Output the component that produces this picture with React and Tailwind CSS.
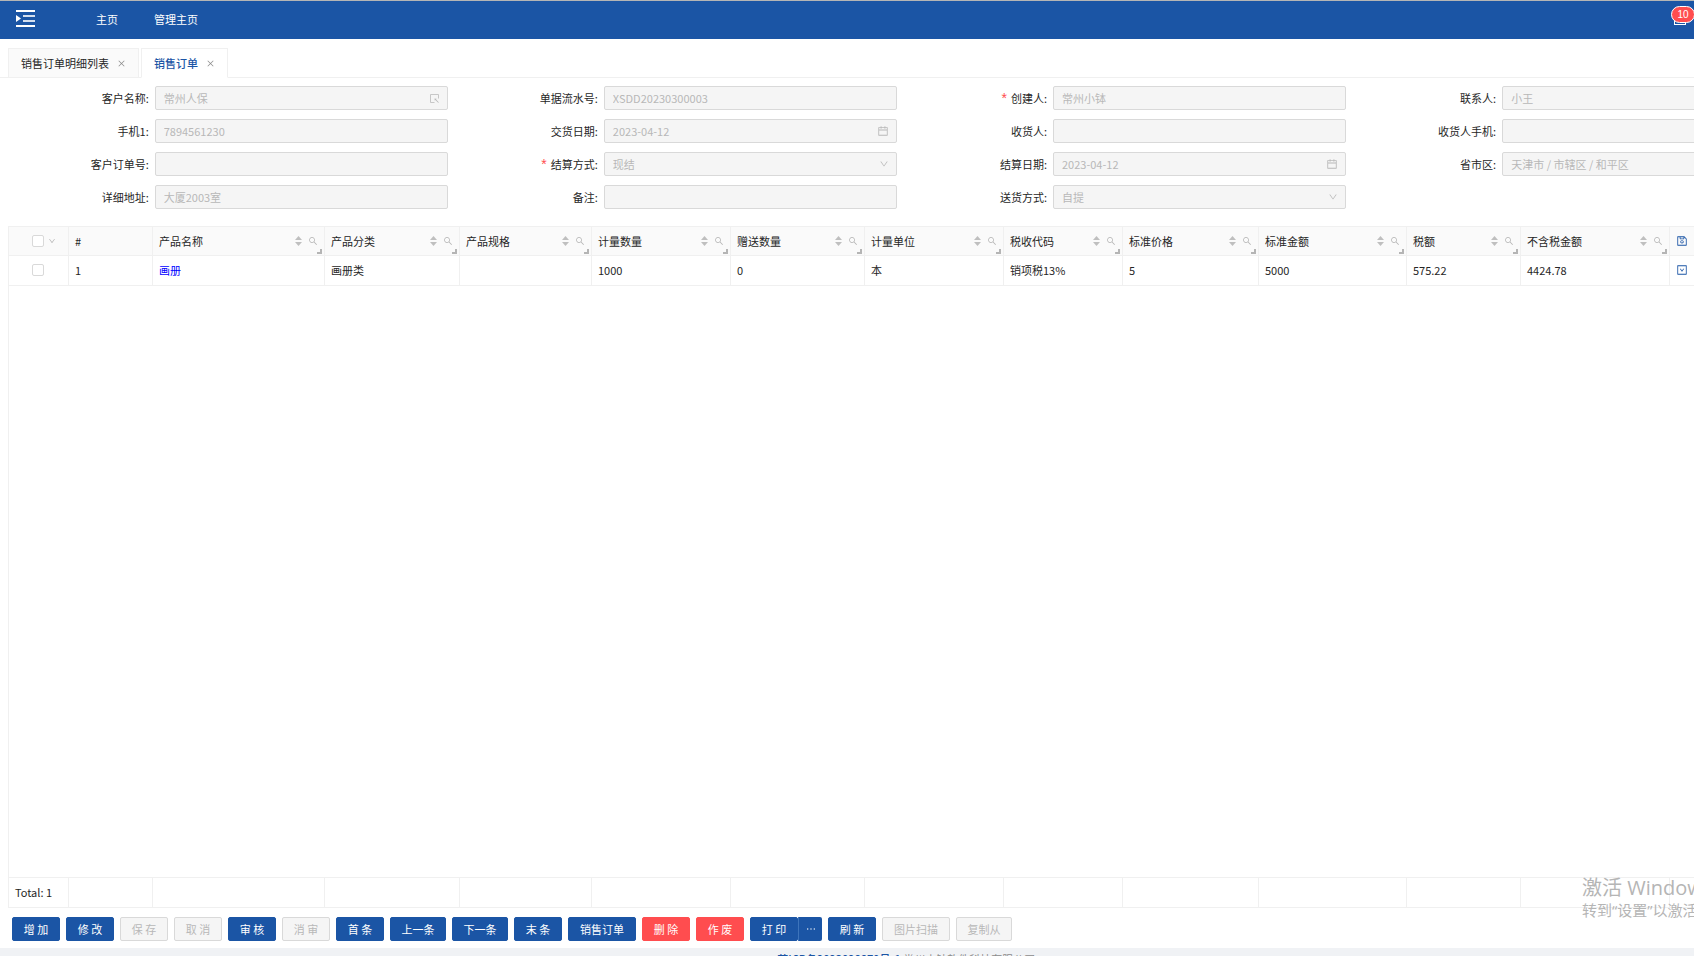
import React from 'react';
import {
  AiOutlineCalendar,
  AiOutlineClose,
  AiOutlineDown,
  AiOutlineDownSquare,
  AiOutlineEllipsis,
  AiOutlineSave,
  AiOutlineSearch,
  AiOutlineSelect,
} from 'react-icons/ai';

const topMenu = ['主页', '管理主页'];

const tabs = [
  { title: '销售订单明细列表', active: false },
  { title: '销售订单', active: true },
];

const fields = [
  { id: 'customer', label: '客户名称', value: '常州人保', icon: 'picker' },
  { id: 'serial', label: '单据流水号', value: 'XSDD20230300003' },
  { id: 'creator', label: '创建人', value: '常州小钵', required: true },
  { id: 'contact', label: '联系人', value: '小王' },
  { id: 'phone', label: '手机1', value: '7894561230' },
  { id: 'delivery', label: '交货日期', value: '2023-04-12', icon: 'date' },
  { id: 'receiver', label: '收货人', value: '' },
  { id: 'receiverPhone', label: '收货人手机', value: '' },
  { id: 'customerNo', label: '客户订单号', value: '' },
  { id: 'settle', label: '结算方式', value: '现结', type: 'select', required: true },
  { id: 'settleDate', label: '结算日期', value: '2023-04-12', icon: 'date' },
  { id: 'region', label: '省市区', value: '天津市 / 市辖区 / 和平区' },
  { id: 'address', label: '详细地址', value: '大厦2003室' },
  { id: 'remark', label: '备注', value: '' },
  { id: 'shipping', label: '送货方式', value: '自提', type: 'select' },
];

const columns = [
  { title: '产品名称', width: 'w-[172px]', value: '画册', link: true },
  { title: '产品分类', width: 'w-[135px]', value: '画册类' },
  { title: '产品规格', width: 'w-[132px]', value: '' },
  { title: '计量数量', width: 'w-[139px]', value: '1000' },
  { title: '赠送数量', width: 'w-[134px]', value: '0' },
  { title: '计量单位', width: 'w-[139px]', value: '本' },
  { title: '税收代码', width: 'w-[119px]', value: '销项税13%' },
  { title: '标准价格', width: 'w-[136px]', value: '5' },
  { title: '标准金额', width: 'w-[148px]', value: '5000' },
  { title: '税额', width: 'w-[114px]', value: '575.22' },
  { title: '不含税金额', width: 'w-[149px]', value: '4424.78' },
];

const buttonStyles = {
  primary: 'bg-[#1b55a5] border-[#1b55a5] text-white',
  danger: 'bg-[#ff4d4f] border-[#ff4d4f] text-white',
  disabled: 'bg-[#f5f5f5] border-[#d9d9d9] text-[#b8b8b8]',
};

const actions = [
  { text: '增 加', kind: 'primary', width: 'w-12' },
  { text: '修 改', kind: 'primary', width: 'w-12' },
  { text: '保 存', kind: 'disabled', width: 'w-12' },
  { text: '取 消', kind: 'disabled', width: 'w-12' },
  { text: '审 核', kind: 'primary', width: 'w-12' },
  { text: '消 审', kind: 'disabled', width: 'w-12' },
  { text: '首 条', kind: 'primary', width: 'w-12' },
  { text: '上一条', kind: 'primary', width: 'w-14' },
  { text: '下一条', kind: 'primary', width: 'w-14' },
  { text: '末 条', kind: 'primary', width: 'w-12' },
  { text: '销售订单', kind: 'primary', width: 'w-[68px]' },
  { text: '删 除', kind: 'danger', width: 'w-12' },
  { text: '作 废', kind: 'danger', width: 'w-12' },
  { text: '打 印', kind: 'primary', width: 'w-12', more: true },
  { text: '刷 新', kind: 'primary', width: 'w-12' },
  { text: '图片扫描', kind: 'disabled', width: 'w-[68px]' },
  { text: '复制从', kind: 'disabled', width: 'w-14' },
];

const MenuIcon = () => (
  <svg width="20" height="18" viewBox="0 0 20 18" fill="none">
    <path d="M0 1h19M0 16h19" stroke="#fff" strokeWidth="2" />
    <path d="M7 6h12M7 11h12" stroke="#d3deee" strokeWidth="2" />
    <path d="M0 5l5 3.5L0 12z" fill="#fff" />
  </svg>
);

const SortIcon = () => (
  <svg width="7" height="10" viewBox="0 0 7 10" fill="#bfbfbf">
    <path d="M3.5 0L7 4H0zM3.5 10L0 6h7z" />
  </svg>
);

const Field = ({ field }) => {
  const box = 'block w-full h-6 px-2 border border-[#d9d9d9] rounded-xs bg-[#f5f5f5] text-[#b8b8b8] appearance-none opacity-100';
  return (
    <div className="flex items-center">
      <label htmlFor={field.id} className="flex items-center justify-end w-1/3 pr-[6px] whitespace-nowrap">
        {field.required && <span className="mr-1 text-sm leading-4 text-[#ff4d4f] font-['Liberation_Sans',sans-serif]">*</span>}
        {field.label}:
      </label>
      <div className="relative flex-1 mr-[6px]">
        {field.type === 'select' ? (
          <select id={field.id} disabled className={box}>
            <option>{field.value}</option>
          </select>
        ) : (
          <input id={field.id} type="text" disabled defaultValue={field.value} className={box} />
        )}
        <span className="absolute inset-y-0 right-2 flex items-center text-[#b8b8b8]">
          {field.icon === 'picker' && <AiOutlineSelect size={11} />}
          {field.icon === 'date' && <AiOutlineCalendar size={12} />}
          {field.type === 'select' && <AiOutlineDown size={10} />}
        </span>
      </div>
    </div>
  );
};

const Columns = () => (
  <colgroup>
    <col className="w-[60px]" />
    <col className="w-[84px]" />
    {columns.map(col => <col key={col.title} className={col.width} />)}
    <col />
  </colgroup>
);

const Tick = ({ label }) => (
  <input type="checkbox" aria-label={label} className="block w-3 h-3 appearance-none border border-[#d9d9d9] rounded-xs bg-white" />
);

const App = () => {
  const cell = 'px-[6px] pb-px border-r border-b border-[#f0f0f0] font-normal text-left';

  return (
    <div className="relative h-screen overflow-hidden bg-[#f0f2f5] text-[11px] leading-4 text-[#262626] font-['Noto_Sans_CJK_SC',sans-serif]">
      <div className="flex flex-col h-[calc(100vh-8px)] bg-white">
        {/* Top bar */}
        <header className="relative flex items-center h-[39px] shrink-0 pb-[2px] pl-4 border-t border-[#b5b5b5] bg-[#1b55a5] text-white">
          <button type="button" aria-label="menu"><MenuIcon /></button>
          <nav className="flex gap-9 ml-[60px]">
            {topMenu.map(item => <a key={item} href="#">{item}</a>)}
          </nav>
          <button type="button" aria-label="messages" className="absolute right-2 top-3 w-3 h-3 border border-white">
            <span className="absolute -top-2 -left-1 h-[17px] w-6 rounded-full border border-white bg-[#ff4d4f] text-[10px] leading-4 font-['Liberation_Sans',sans-serif]">10</span>
          </button>
        </header>

        <main className="flex flex-col flex-1 min-h-0 w-[106%]">
          {/* Tabs */}
          <div className="flex gap-[2px] mt-[9px] pl-2 border-b border-[#f0f0f0]">
            {tabs.map(tab => (
              <div
                key={tab.title}
                className={`flex items-center gap-2 h-[30px] px-3 -mb-px border border-[#f0f0f0] ${
                  tab.active ? 'bg-white border-b-white text-[#1b55a5] font-medium' : 'bg-[#fafafa]'
                }`}
              >
                <a href="#">{tab.title}</a>
                <button type="button" aria-label="close" className="text-[#8c8c8c]"><AiOutlineClose size={9} /></button>
              </div>
            ))}
          </div>

          {/* Order form */}
          <form className="grid grid-cols-4 gap-y-[9px] pt-2 pb-[17px] pl-[5px] -mr-[6px]">
            {fields.map(field => <Field key={field.id} field={field} />)}
          </form>

          {/* Product table */}
          <div className="flex flex-col flex-1 min-h-0 ml-2 border-t border-l border-[#f0f0f0]">
            <table className="w-full table-fixed border-separate border-spacing-0">
              <Columns />
              <thead className="bg-[#fafafa]">
                <tr className="h-[29px]">
                  <th className={cell}>
                    <div className="flex items-center gap-1 pl-[17px]">
                      <Tick label="select all" />
                      <AiOutlineDown size={8} className="text-[#b5b5b5]" />
                    </div>
                  </th>
                  <th className={cell}>#</th>
                  {columns.map(col => (
                    <th key={col.title} className={`${cell} relative`}>
                      <div className="flex items-center gap-[6px]">
                        <span className="flex-1">{col.title}</span>
                        <SortIcon />
                        <AiOutlineSearch size={10} className="text-[#b5b5b5]" />
                      </div>
                      <span className="absolute right-[2px] bottom-px w-[5px] h-[5px] border-r-2 border-b-2 border-[#b5b5b5]" />
                    </th>
                  ))}
                  <th className={cell}>
                    <button type="button" aria-label="save" className="block text-[#1b55a5]"><AiOutlineSave size={12} /></button>
                  </th>
                </tr>
              </thead>
              <tbody>
                <tr className="h-[30px]">
                  <td className={cell}>
                    <div className="pl-[17px]"><Tick label="select row" /></div>
                  </td>
                  <td className={cell}>1</td>
                  {columns.map(col => (
                    <td key={col.title} className={cell}>
                      {col.link ? <a href="#" className="text-[#0000ff]">{col.value}</a> : col.value}
                    </td>
                  ))}
                  <td className={cell}>
                    <button type="button" aria-label="expand" className="block text-[#1b55a5]"><AiOutlineDownSquare size={12} /></button>
                  </td>
                </tr>
              </tbody>
            </table>
            <table className="w-full mt-auto table-fixed border-separate border-spacing-0 border-t border-[#f0f0f0]">
              <Columns />
              <tbody>
                <tr className="h-[30px]">
                  <td className={cell}>Total: 1</td>
                  <td className={cell} />
                  {columns.map(col => <td key={col.title} className={cell} />)}
                  <td className={cell} />
                </tr>
              </tbody>
            </table>
          </div>

          {/* Actions */}
          <div className="flex gap-[6px] pt-[9px] pb-[7px] pl-3">
            {actions.map(action => (
              <div key={action.text} className="flex">
                <button
                  type="button"
                  disabled={action.kind === 'disabled'}
                  className={`h-6 border rounded-xs whitespace-nowrap ${action.width} ${buttonStyles[action.kind]}`}
                >
                  {action.text}
                </button>
                {action.more && (
                  <button type="button" aria-label="more" className="flex items-center justify-center w-6 h-6 rounded-r-xs border-l border-[#3d74bb] bg-[#1b55a5] text-white">
                    <AiOutlineEllipsis size={12} />
                  </button>
                )}
              </div>
            ))}
          </div>
        </main>
      </div>

      <footer className="w-[107%] pt-[3px] text-center text-[#8c8c8c]">
        <a href="#" className="text-[#1b55a5] font-medium">苏ICP备2023028879号-1</a> 常州小钵软件科技有限公司
      </footer>

      {/* System watermark */}
      <div className="absolute left-[1582px] bottom-9 whitespace-nowrap text-[#b5b5b5] font-['Open_Sans','Noto_Sans_CJK_SC',sans-serif] pointer-events-none">
        <p className="text-xl leading-6">激活 Windows</p>
        <p className="text-[15px] leading-5">转到“设置”以激活 Windows。</p>
      </div>
    </div>
  );
};

export default App;
